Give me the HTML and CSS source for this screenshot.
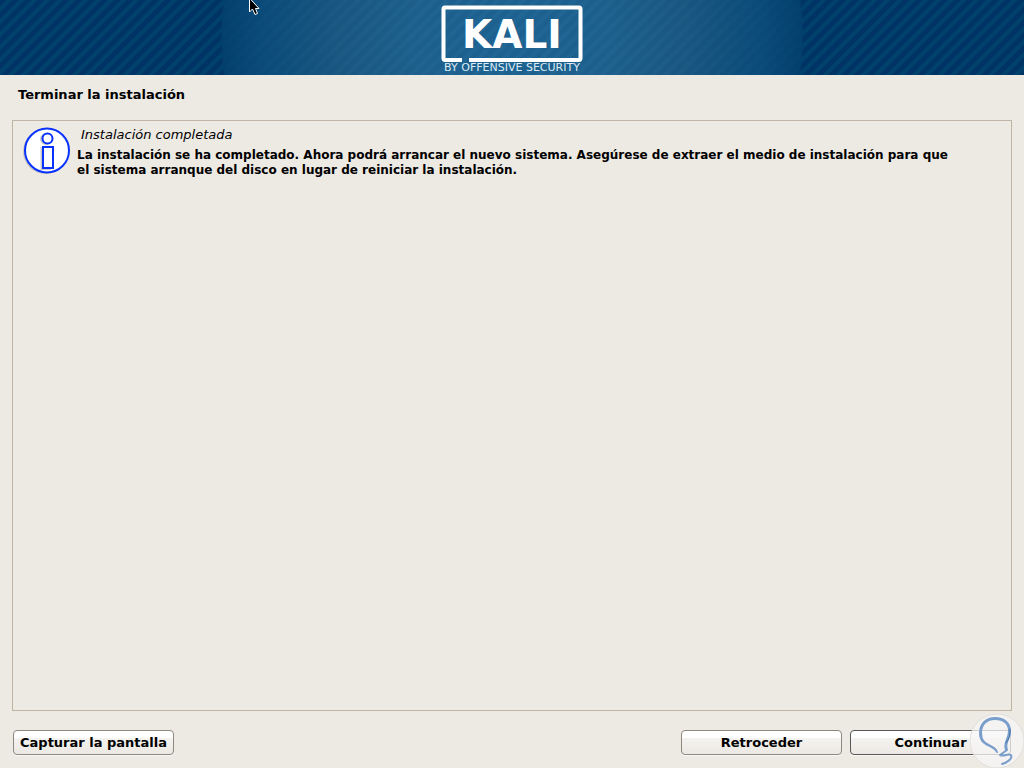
FILE: index.html
```html
<!DOCTYPE html>
<html lang="es">
<head>
<meta charset="utf-8">
<title>Terminar la instalación</title>
<link rel="stylesheet" href="styles.css">
</head>
<body>
<header class="banner">
  <svg class="logo" viewBox="0 0 144 75" role="img" aria-label="Kali by Offensive Security">
    <path d="M22 60H5Q3.500 60 3.500 58V9Q3.500 7.500 5 7.500H139Q140.500 7.500 140.500 9V58Q140.500 60 139 60H29" fill="none" stroke="#fff" stroke-width="4"/>
    <text class="logo-name" x="72" y="48" text-anchor="middle">KALI</text>
    <text class="logo-tag" x="72" y="71" text-anchor="middle">BY OFFENSIVE SECURITY</text>
  </svg>
  <svg class="cursor" viewBox="0 0 12 17" aria-hidden="true">
    <path d="M.5-2V12L3.500 9L6 14.500L8.500 13.500L6.500 8.500H10Z" fill="#000" stroke="#fff"/>
  </svg>
</header>
<main class="installer">
  <h1 class="title">Terminar la instalación</h1>
  <section class="panel">
    <svg class="info" viewBox="0 0 50 50" aria-hidden="true">
      <circle cx="22.500" cy="24.500" r="22.500" fill="#c9c6c0"/>
      <circle cx="24" cy="23.500" r="22" fill="#fff" stroke="#0a32ff" stroke-width="2"/>
      <g fill="none" stroke="#c9c9c9" stroke-width="2"><circle cx="23" cy="12" r="5"/><path d="M18.500 21H27V42H18.500Z"/></g>
      <g fill="#fff" stroke="#0a32ff" stroke-width="2"><circle cx="24.500" cy="11.500" r="5"/><path d="M20 20H30V41H20Z"/></g>
    </svg>
    <div class="message">
      <h2 class="subtitle">Instalación completada</h2>
      <p class="text">La instalación se ha completado. Ahora podrá arrancar el nuevo sistema. Asegúrese de extraer el medio de instalación para que el sistema arranque del disco en lugar de reiniciar la instalación.</p>
    </div>
  </section>
  <footer class="actions">
    <button class="button" type="button">Capturar la pantalla</button>
    <div class="navigation">
      <button class="button" type="button">Retroceder</button>
      <button class="button primary" type="button">Continuar</button>
    </div>
  </footer>
</main>
<svg class="watermark" viewBox="0 0 56 56" aria-hidden="true">
  <circle cx="28" cy="28" r="27" fill="#f7f6f5" fill-opacity=".75" stroke="#e1dedb"/>
  <g fill="none" stroke="#7a9ecb" stroke-width="2" stroke-linecap="round" stroke-linejoin="round">
    <path d="M28 39C25 31 11 34 11 20C11 10 18 5 26 5C35 5 41 10 41 18C41 27 35 29 38 37L31 42C35 44 39 40 42 42C44 46 37 50 33 51"/>
    <path d="M27 37C23 31 12 33 12 20C12 11 18 6 26 6C35 6 40 11 40 18C40 27 34 29 37 37"/>
    <path d="M41 16Q42 24 37 30" stroke="#456fa8" stroke-width="1"/>
  </g>
</svg>
</body>
</html>
```
FILE: styles.css
```css
* { box-sizing: border-box; }
body {
  margin: 0;
  min-height: 100vh;
  display: flex;
  flex-direction: column;
  background: #ede9e3;
  color: #000;
  font-family: "DejaVu Sans", Verdana, sans-serif;
  font-size: 13px;
  line-height: 15px;
}
.banner {
  position: relative;
  min-height: 75px;
  display: flex;
  justify-content: center;
  align-items: flex-start;
  background:
    repeating-linear-gradient(135deg, rgba(0, 50, 100, .1) 0 4px, transparent 5px 8px, rgba(0, 50, 100, .1) 9px) center / 580px 100% no-repeat,
    radial-gradient(circle 292px at 50% 36px, #206796 0, #206390 35%, #1c5a83 60%, #0c4d7c 85%, #04416f 99%, transparent 100%),
    repeating-linear-gradient(135deg, #003366 0 4px, #00426c 5px 8px, #003366 9px);
}
.logo { width: 144px; height: 75px; }
.logo-name { fill: #fff; font-size: 39px; font-weight: 700; }
.logo-tag { fill: #dcebf3; font-size: 11px; }
.cursor {
  position: absolute;
  left: 249px;
  top: 0;
  width: 12px;
  height: 17px;
}
.installer {
  flex: 1;
  display: flex;
  flex-direction: column;
  padding: 12px;
}
.title {
  margin: 0 6px 18px;
  font-size: 13px;
  font-weight: 700;
}
.panel {
  flex: 1;
  display: flex;
  align-items: flex-start;
  gap: 4px;
  padding: 6px 10px;
  border: 1px solid #bfb5a5;
}
.info { flex: none; width: 50px; height: 50px; }
.message { flex: 1; }
.subtitle {
  margin: 0 4px 6px;
  font-size: 13px;
  font-weight: 400;
  font-style: italic;
}
.text {
  margin: 0 42px 0 0;
  font-size: 12px;
  font-weight: 700;
}
.actions {
  display: flex;
  justify-content: space-between;
  margin: 19px 1px 1px;
}
.navigation { display: flex; gap: 8px; }
.button {
  width: 161px;
  height: 25px;
  padding: 0;
  border: 1px solid #8e8880;
  border-radius: 4px;
  background: linear-gradient(#fff 0 30%, #f4f3f0 31%, #ece8e3);
  box-shadow: 0 1px 0 #faf8f5;
  color: #000;
  font: 700 13px/15px "DejaVu Sans", Verdana, sans-serif;
}
.primary { border-color: #575757; }
.watermark {
  position: fixed;
  right: -1px;
  bottom: -1px;
  width: 56px;
  height: 56px;
  pointer-events: none;
}
```
